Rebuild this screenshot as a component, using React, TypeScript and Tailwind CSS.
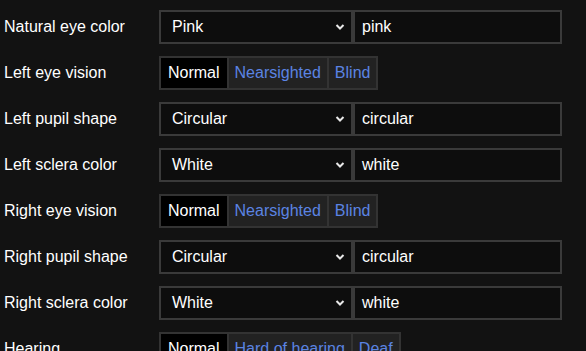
import type React from "react";

type Row =
	| { label: string; kind: "select"; value: string; text: string }
	| { label: string; kind: "buttons"; options: string[]; selected: number };

const rows: Row[] = [
	{ label: "Natural eye color", kind: "select", value: "Pink", text: "pink" },
	{ label: "Left eye vision", kind: "buttons", options: ["Normal", "Nearsighted", "Blind"], selected: 0 },
	{ label: "Left pupil shape", kind: "select", value: "Circular", text: "circular" },
	{ label: "Left sclera color", kind: "select", value: "White", text: "white" },
	{ label: "Right eye vision", kind: "buttons", options: ["Normal", "Nearsighted", "Blind"], selected: 0 },
	{ label: "Right pupil shape", kind: "select", value: "Circular", text: "circular" },
	{ label: "Right sclera color", kind: "select", value: "White", text: "white" },
	{ label: "Hearing", kind: "buttons", options: ["Normal", "Hard of hearing", "Deaf"], selected: 0 },
];

const Chevron: React.FC = () => (
	<svg width="10" height="6" viewBox="0 0 10 6" className="shrink-0">
		<path d="M1.5 1 L5 4.5 L8.5 1" fill="none" stroke="#e8e8e8" strokeWidth="2" />
	</svg>
);

const App: React.FC = () => {
	return (
		<div
			className="w-[586px] h-[351px] overflow-hidden bg-[#121212] text-white text-[16px] pt-[10px]"
			style={{ fontFamily: '"Liberation Sans", Arial, sans-serif' }}
		>
			<div className="flex flex-col gap-[12px]">
				{rows.map((row, i) => (
					<div key={i} className="flex items-center h-[34px]">
						<div className="w-[159px] pl-[4px] shrink-0">{row.label}</div>
						{row.kind === "select" ? (
							<div className="flex h-[34px]">
								<div className="w-[194px] h-full flex items-center justify-between border-2 border-[#3a3a3a] bg-[#0d0d0d] pl-[11px] pr-[6px]">
									<span>{row.value}</span>
									<Chevron />
								</div>
								<div className="w-[209px] h-full flex items-center border-2 border-[#3a3a3a] bg-[#0d0d0d] pl-[7px]">
									{row.text}
								</div>
							</div>
						) : (
							<div className="flex h-[34px] border-2 border-[#333333]">
								{row.options.map((opt, j) => (
									<div
										key={j}
										className={
											j === row.selected
												? "flex items-center px-[7px] bg-black text-white"
												: "flex items-center px-[6px] bg-[#222222] text-[#5b84e3] border-l-2 border-[#333333]"
										}
									>
										{opt}
									</div>
								))}
							</div>
						)}
					</div>
				))}
			</div>
		</div>
	);
};

export default App;
